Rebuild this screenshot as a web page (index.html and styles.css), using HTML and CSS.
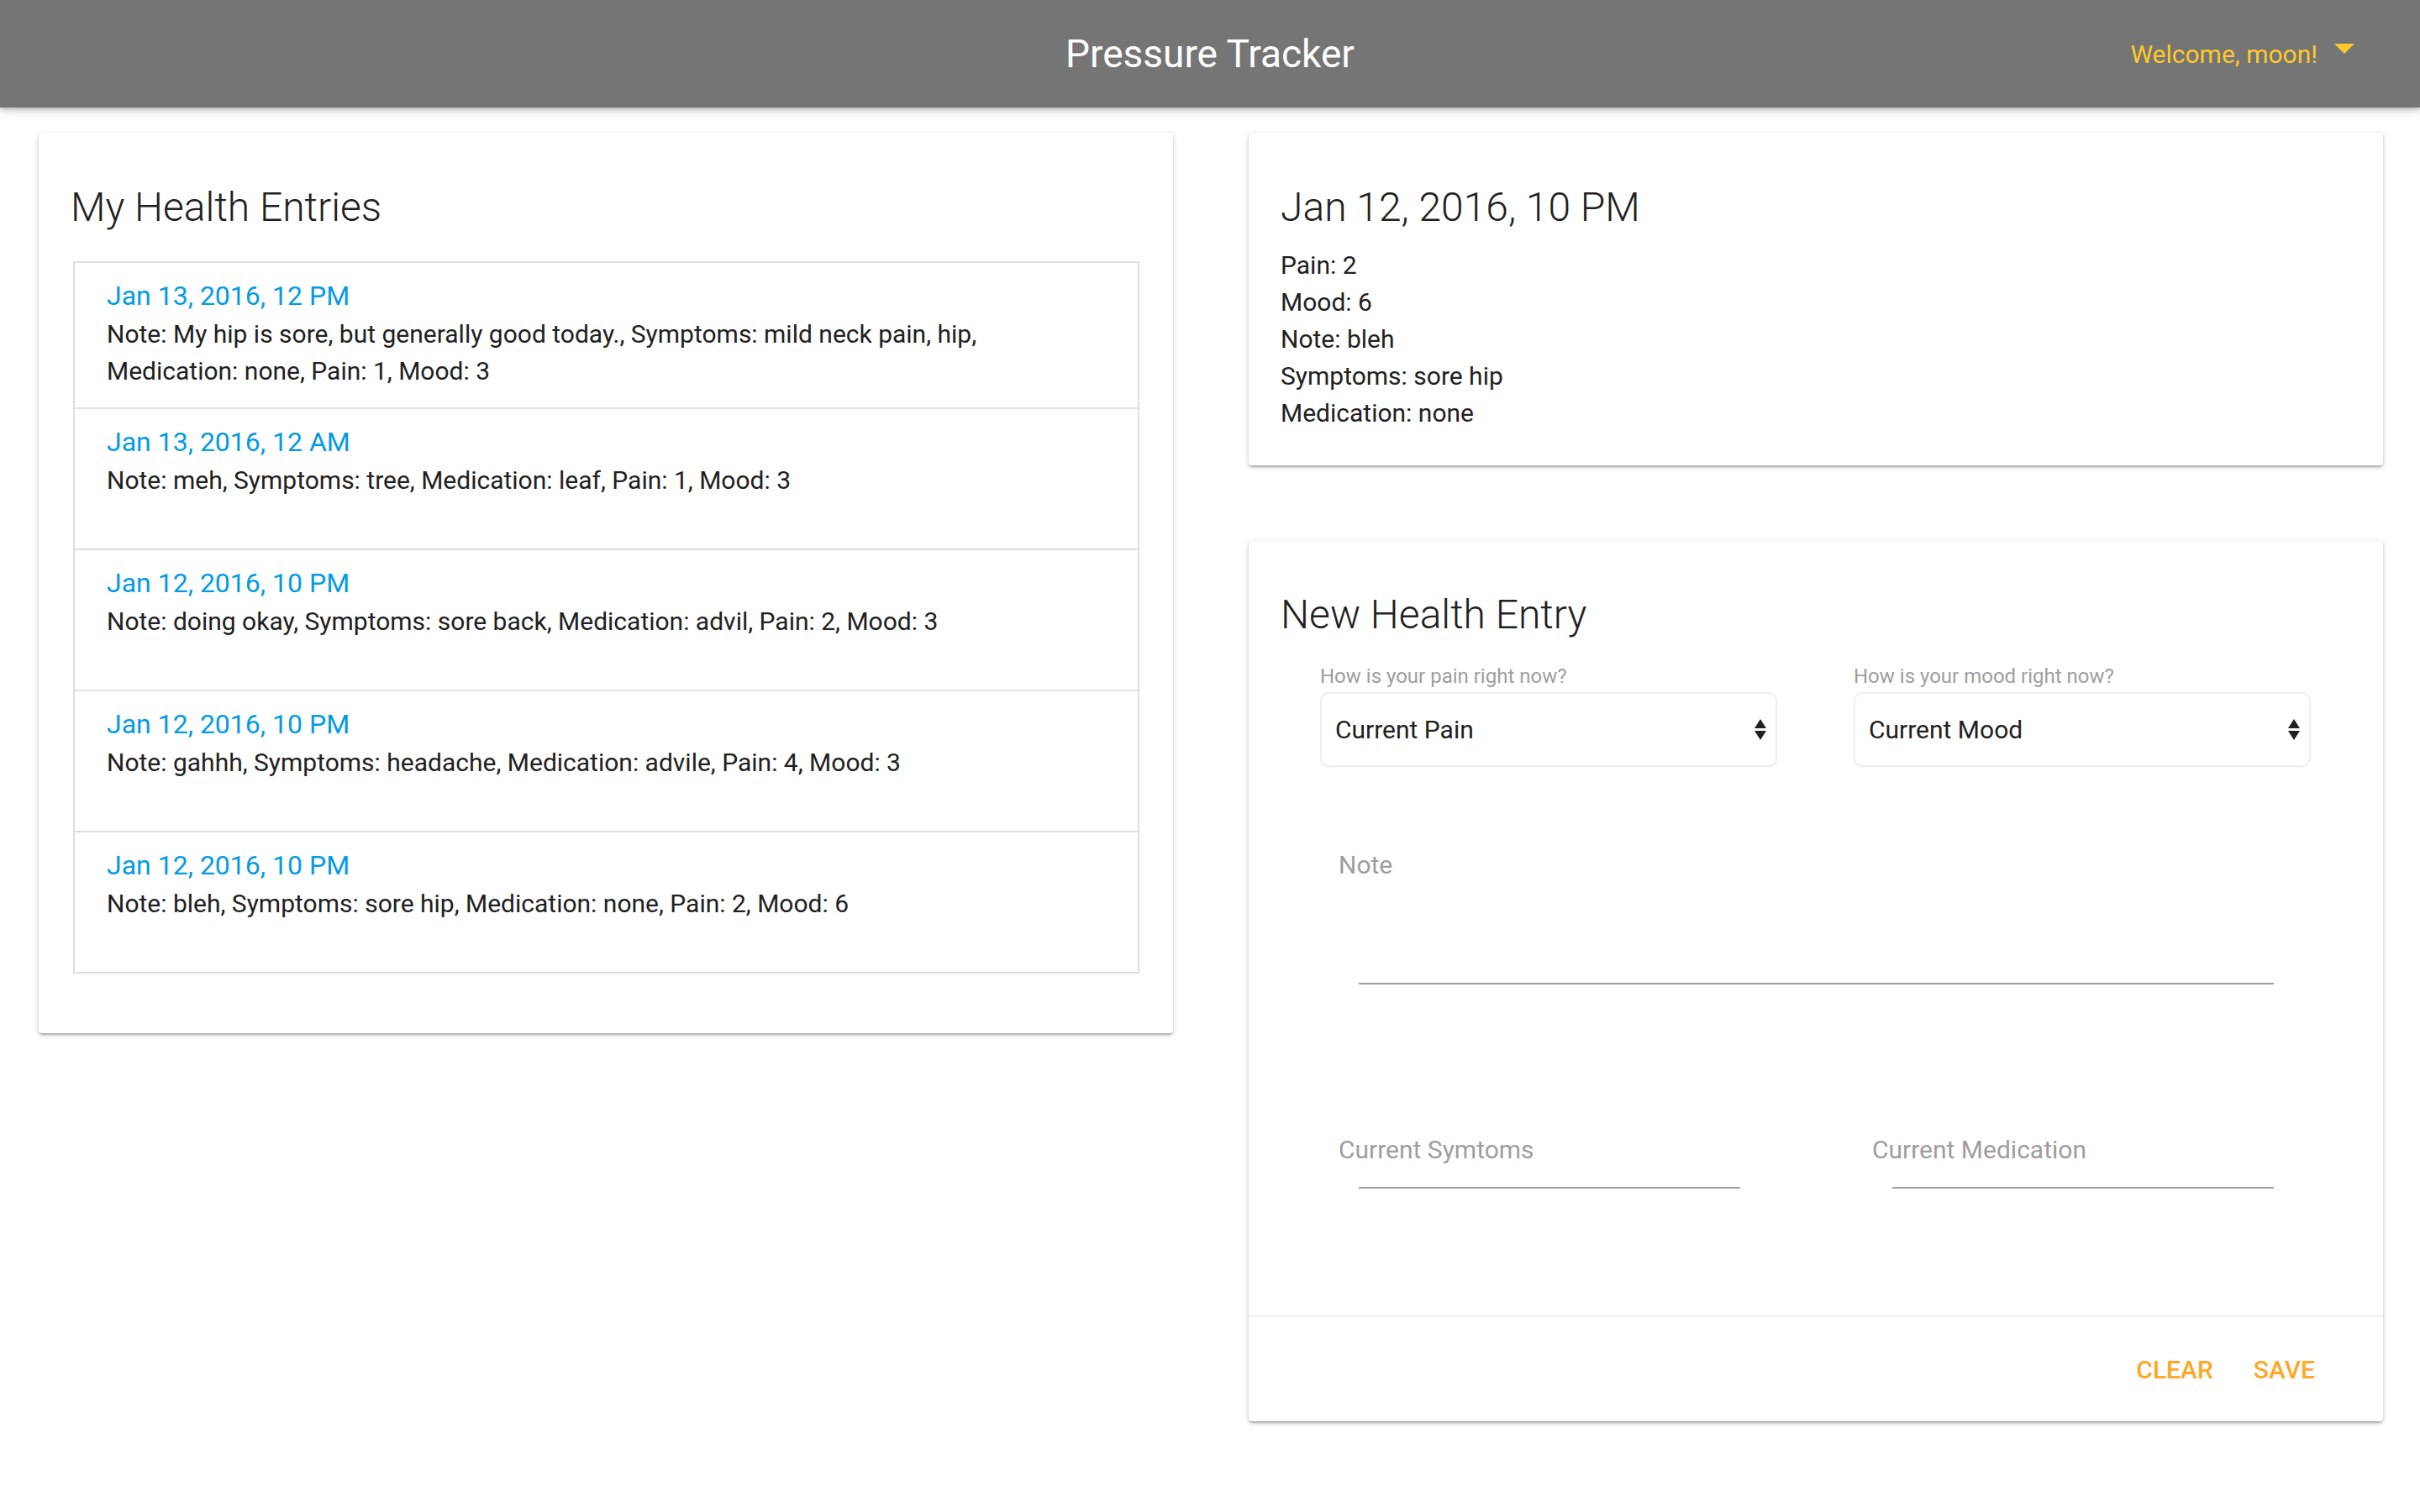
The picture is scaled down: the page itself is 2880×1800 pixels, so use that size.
FILE: index.html
```html
<!DOCTYPE html>
<html lang="en">
<head>
<meta charset="utf-8">
<title>Pressure Tracker</title>
<link rel="stylesheet" href="styles.css">
</head>
<body>
<header class="topbar">
  <h1 class="app-title">Pressure Tracker</h1>
  <div class="user-menu">
    <span class="welcome">Welcome, moon!</span>
    <span class="caret"></span>
  </div>
</header>

<main class="layout">
  <section class="card entries-card">
    <h2 class="card-title entries-title">My Health Entries</h2>
    <ul class="entry-list">
      <li class="entry">
        <div class="entry-date">Jan 13, 2016, 12 PM</div>
        <p class="entry-text">Note: My hip is sore, but generally good today., Symptoms: mild neck pain, hip, Medication: none, Pain: 1, Mood: 3</p>
      </li>
      <li class="entry">
        <div class="entry-date">Jan 13, 2016, 12 AM</div>
        <p class="entry-text">Note: meh, Symptoms: tree, Medication: leaf, Pain: 1, Mood: 3</p>
      </li>
      <li class="entry">
        <div class="entry-date">Jan 12, 2016, 10 PM</div>
        <p class="entry-text">Note: doing okay, Symptoms: sore back, Medication: advil, Pain: 2, Mood: 3</p>
      </li>
      <li class="entry">
        <div class="entry-date">Jan 12, 2016, 10 PM</div>
        <p class="entry-text">Note: gahhh, Symptoms: headache, Medication: advile, Pain: 4, Mood: 3</p>
      </li>
      <li class="entry">
        <div class="entry-date">Jan 12, 2016, 10 PM</div>
        <p class="entry-text">Note: bleh, Symptoms: sore hip, Medication: none, Pain: 2, Mood: 6</p>
      </li>
    </ul>
  </section>

  <div class="side">
    <section class="card detail-card">
      <h2 class="card-title">Jan 12, 2016, 10 PM</h2>
      <div class="detail-lines">
        <div class="detail-line">Pain: 2</div>
        <div class="detail-line">Mood: 6</div>
        <div class="detail-line">Note: bleh</div>
        <div class="detail-line">Symptoms: sore hip</div>
        <div class="detail-line">Medication: none</div>
      </div>
    </section>

    <section class="card form-card">
      <h2 class="card-title form-title">New Health Entry</h2>
      <div class="form-grid">
        <div class="select-group">
          <div class="select-label">How is your pain right now?</div>
          <div class="select">
            <span>Current Pain</span>
            <svg class="select-arrows" width="14" height="25" viewBox="0 0 14 25"><polygon points="7,0 14,11 0,11"/><polygon points="0,14 14,14 7,25"/></svg>
          </div>
        </div>
        <div class="select-group">
          <div class="select-label">How is your mood right now?</div>
          <div class="select">
            <span>Current Mood</span>
            <svg class="select-arrows" width="14" height="25" viewBox="0 0 14 25"><polygon points="7,0 14,11 0,11"/><polygon points="0,14 14,14 7,25"/></svg>
          </div>
        </div>
        <div class="text-field note-field">
          <div class="placeholder">Note</div>
          <div class="underline note-underline"></div>
        </div>
        <div class="text-field short-field">
          <div class="placeholder">Current Symtoms</div>
          <div class="underline short-underline"></div>
        </div>
        <div class="text-field short-field">
          <div class="placeholder">Current Medication</div>
          <div class="underline short-underline"></div>
        </div>
      </div>
      <div class="card-actions">
        <button class="flat-btn" type="button">Clear</button>
        <button class="flat-btn" type="button">Save</button>
      </div>
    </section>
  </div>
</main>
</body>
</html>
```
FILE: styles.css
```css
* {
  box-sizing: border-box;
}

html,
body {
  margin: 0;
  padding: 0;
  background: #ffffff;
}

body {
  width: 2880px;
  min-height: 1800px;
  font-family: Roboto, "Noto Sans", "Liberation Sans", sans-serif;
  color: #212121;
}

/* ---------- top bar ---------- */
.topbar {
  position: relative;
  z-index: 2;
  height: 128px;
  background: #757575;
  display: grid;
  grid-template-columns: 1fr auto 1fr;
  align-items: center;
  box-shadow: 0 2px 5px rgba(0, 0, 0, 0.22), 0 5px 12px rgba(0, 0, 0, 0.12);
}

.app-title {
  grid-column: 2;
  margin: 0;
  color: #ffffff;
  font-size: 46px;
  font-weight: 400;
}

.user-menu {
  grid-column: 3;
  justify-self: end;
  display: flex;
  align-items: center;
  gap: 20px;
  margin-right: 78px;
  color: #ffca28;
  font-size: 30px;
}

.caret {
  width: 0;
  height: 0;
  border-left: 12px solid transparent;
  border-right: 12px solid transparent;
  border-top: 12px solid #ffca28;
  margin-top: -13px;
}

/* ---------- layout ---------- */
.layout {
  display: grid;
  grid-template-columns: 1350px 1350px;
  column-gap: 90px;
  align-items: start;
  padding: 30px 0 0 46px;
}

.side {
  display: flex;
  flex-direction: column;
  gap: 90px;
}

.card {
  background: #ffffff;
  border-radius: 4px;
  box-shadow: 0 2px 6px rgba(0, 0, 0, 0.2), 0 2px 2px rgba(0, 0, 0, 0.12), 0 4px 2px -2px rgba(0, 0, 0, 0.1);
}

.card-title {
  margin: 0;
  font-size: 48px;
  font-weight: 300;
  line-height: 64px;
  color: #212121;
}

/* ---------- entries ---------- */
.entries-card {
  padding: 57px 40px 71px 38px;
}

.entry-list {
  list-style: none;
  margin: 32px 0 0 3px;
  padding: 0;
  border: 2px solid #e0e0e0;
}

.entry {
  min-height: 168px;
  padding: 17px 120px 21px 38px;
  border-top: 2px solid #e0e0e0;
}

.entry:first-child {
  border-top: none;
  min-height: 0;
}

.entry:last-child {
  min-height: 168px;
}

.entry-date {
  font-size: 32px;
  line-height: 44px;
  margin-bottom: 2px;
  color: #039be5;
}

.entry-text {
  margin: 0;
  font-size: 30px;
  line-height: 44px;
  color: #212121;
}

/* ---------- detail card ---------- */
.detail-card {
  padding: 57px 40px 40px 38px;
}

.detail-lines {
  margin-top: 15px;
}

.detail-line {
  font-size: 30px;
  line-height: 44px;
}

/* ---------- form card ---------- */
.form-card {
  padding: 56px 0 0 0;
}

.form-title {
  padding-left: 38px;
}

.form-grid {
  display: grid;
  grid-template-columns: 1fr 1fr;
  column-gap: 91px;
  padding: 0 86px 0 85px;
  margin-top: 26px;
}

.select-label {
  font-size: 24px;
  line-height: 30px;
  margin-bottom: 4px;
  color: #9e9e9e;
}

.select {
  height: 89px;
  border: 2px solid #eeeeee;
  border-radius: 10px;
  display: flex;
  align-items: center;
  justify-content: space-between;
  padding: 0 11px 0 16px;
  font-size: 30px;
  color: #212121;
  box-shadow: 0 1px 1px rgba(0, 0, 0, 0.03);
}

.select-arrows {
  fill: #212121;
}

.text-field .placeholder {
  font-size: 30px;
  line-height: 40px;
  padding-left: 22px;
  color: #9e9e9e;
}

.underline {
  height: 2px;
  background: #9e9e9e;
  margin: 0 44px 0 46px;
}

.note-field {
  grid-column: 1 / -1;
  margin-top: 97px;
}

.note-underline {
  margin-top: 120px;
}

.short-field {
  margin-top: 177px;
}

.short-underline {
  margin-top: 24px;
}

.card-actions {
  margin-top: 151px;
  height: 126px;
  border-top: 2px solid #eeeeee;
  display: flex;
  justify-content: flex-end;
  align-items: center;
  gap: 48px;
  padding-right: 81px;
}

.flat-btn {
  border: none;
  background: transparent;
  padding: 0;
  font-family: inherit;
  font-size: 30px;
  font-weight: 500;
  text-transform: uppercase;
  color: #ffa726;
  cursor: pointer;
}
```
